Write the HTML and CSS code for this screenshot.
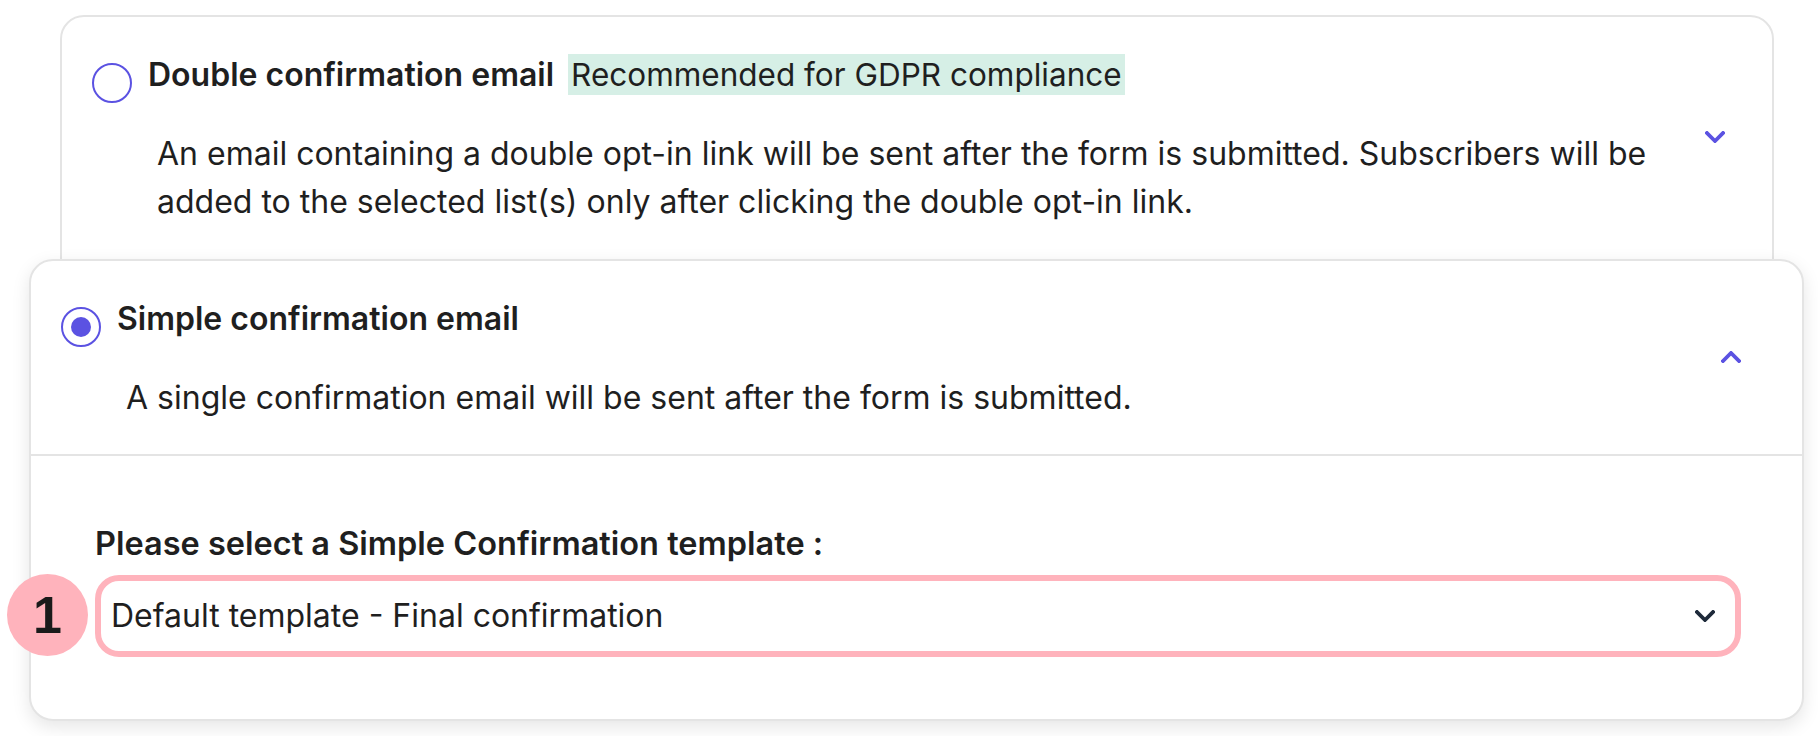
FILE: index.html
```html
<!DOCTYPE html>
<html lang="en">
<head>
<meta charset="utf-8">
<title>Confirmation email</title>
<link rel="stylesheet" href="styles.css">
</head>
<body>
<div class="page">
  <div class="card card-double">
    <div class="card-row">
      <div class="card-content">
        <div class="option-head">
          <span class="radio"></span>
          <span class="option-title">Double confirmation email</span>
          <span class="tag">Recommended for GDPR compliance</span>
        </div>
        <p class="option-desc">An email containing a double opt-in link will be sent after the form is submitted. Subscribers will be added to the selected list(s) only after clicking the double opt-in link.</p>
      </div>
      <svg class="chevron chevron-purple" viewBox="0 0 20 12" width="20" height="12"><path d="M2 2 L10 10 L18 2" fill="none" stroke="currentColor" stroke-width="3.8" stroke-linecap="square" stroke-linejoin="miter"/></svg>
    </div>
  </div>
  <div class="card card-simple">
    <div class="card-row card-row-simple">
      <div class="card-content">
        <div class="option-head">
          <span class="radio radio-checked"></span>
          <span class="option-title">Simple confirmation email</span>
        </div>
        <p class="option-desc">A single confirmation email will be sent after the form is submitted.</p>
      </div>
      <svg class="chevron chevron-purple" viewBox="0 0 20 12" width="20" height="12"><path d="M2 10 L10 2 L18 10" fill="none" stroke="currentColor" stroke-width="3.8" stroke-linecap="square" stroke-linejoin="miter"/></svg>
    </div>
    <div class="card-body">
      <div class="field-label">Please select a Simple Confirmation template :</div>
      <div class="select-wrap">
        <span class="step-badge">1</span>
        <div class="select">
          <span class="select-value">Default template - Final confirmation</span>
          <svg class="chevron chevron-dark" viewBox="0 0 20 12" width="20" height="12"><path d="M2 2 L10 10 L18 2" fill="none" stroke="currentColor" stroke-width="3.8" stroke-linecap="square" stroke-linejoin="miter"/></svg>
        </div>
      </div>
    </div>
  </div>
</div>
</body>
</html>
```

FILE: styles.css
```css
* { box-sizing: border-box; }
html, body { margin: 0; padding: 0; background: #ffffff; }
body {
  font-family: Inter, "Noto Sans", sans-serif;
  color: #1f1f1f;
  width: 1818px;
  height: 736px;
  overflow: hidden;
}
.page { padding-top: 15px; }
.card {
  background: #ffffff;
  border: 2px solid #e4e4e4;
  border-radius: 24px;
}
.card-double {
  margin: 0 44px -51px 60px;
  padding: 37px 47px 82px 30px;
}
.card-simple {
  position: relative;
  margin: 0 14px 0 29px;
  box-shadow: 0 6px 18px rgba(0, 0, 0, 0.10);
}
.card-row {
  display: flex;
  align-items: center;
}
.card-row-simple {
  padding: 37px 61px 32px 30px;
  border-bottom: 2px solid #e4e4e4;
}
.card-content { flex: 1; padding-right: 20px; }
.option-head {
  display: flex;
  align-items: flex-start;
  gap: 16px;
  height: 41px;
}
.radio {
  flex: none;
  width: 40px;
  height: 40px;
  margin-top: 9px;
  border: 2px solid #5b52e2;
  border-radius: 50%;
  display: flex;
  align-items: center;
  justify-content: center;
}
.radio-checked::after {
  content: "";
  width: 20px;
  height: 20px;
  border-radius: 50%;
  background: #5b52e2;
}
.option-title {
  font-size: 32px;
  font-weight: 600;
  line-height: 41px;
}
.tag {
  background: #d6efe6;
  font-size: 31.5px;
  line-height: 41px;
  padding: 0 3px;
  margin-left: -2px;
}
.option-desc {
  margin: 35px 0 0 65px;
  font-size: 32px;
  line-height: 48px;
}
.chevron { flex: none; display: block; }
.chevron-purple { color: #5b52e2; margin-bottom: 7px; }
.chevron-dark { color: #1e2a3a; }
.card-body {
  padding: 68px 61px 62px 64px;
}
.field-label {
  font-size: 32.5px;
  font-weight: 600;
  line-height: 40px;
}
.select-wrap {
  position: relative;
  margin-top: 11px;
}
.select {
  display: flex;
  align-items: center;
  justify-content: space-between;
  height: 82px;
  border: 6px solid #ffb3bc;
  border-radius: 24px;
  padding: 0 20px 0 10px;
  background: #ffffff;
}
.select-value {
  font-size: 32px;
  line-height: 40px;
}
.step-badge {
  position: absolute;
  left: -88px;
  top: -1px;
  width: 81px;
  height: 82px;
  border-radius: 50%;
  background: #ffb3bc;
  display: flex;
  align-items: center;
  justify-content: center;
  font-family: "Liberation Sans", Arial, sans-serif;
  font-size: 52px;
  font-weight: 700;
  color: #1a1a1a;
  line-height: 1;
}
```
